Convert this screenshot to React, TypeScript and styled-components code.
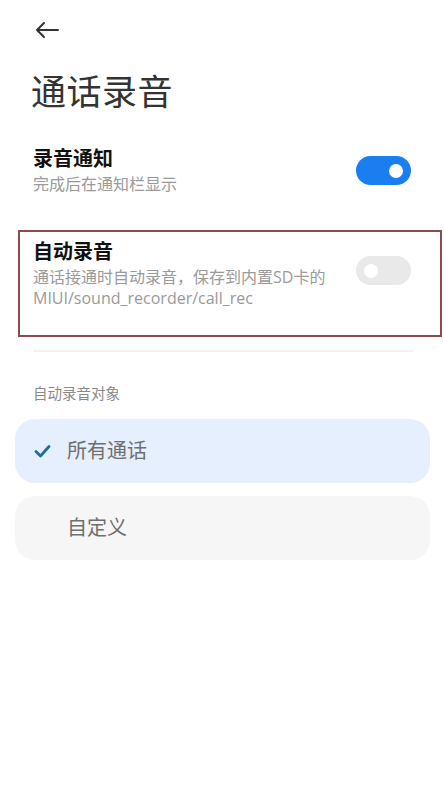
import React, { useState } from 'react';
import styled, { createGlobalStyle } from 'styled-components';

const GlobalStyle = createGlobalStyle`
  html, body {
    margin: 0;
    padding: 0;
    background: #ffffff;
  }
  body {
    font-family: "Open Sans", "Noto Sans CJK SC", sans-serif;
    -webkit-font-smoothing: antialiased;
  }
`;

const Page = styled.div`
  width: 444px;
  min-height: 800px;
  display: flex;
  flex-direction: column;
  box-sizing: border-box;
  padding-bottom: 40px;
`;

const Header = styled.div`
  height: 60px;
  display: flex;
  align-items: center;
  padding: 0 0 0 34px;
`;

const BackButton = styled.button`
  background: none;
  border: none;
  padding: 0;
  width: 28px;
  height: 28px;
  display: flex;
  align-items: center;
  cursor: pointer;
  color: #333;
`;

const Title = styled.h1`
  margin: 12px 0 0 31px;
  font-size: 35px;
  font-weight: 400;
  line-height: 40px;
  color: #333;
  letter-spacing: 0.5px;
`;

const Row = styled.div<{ $highlight?: boolean }>`
  display: flex;
  justify-content: space-between;
  box-sizing: border-box;
  ${p => p.$highlight
    ? `
    align-items: flex-start;
    margin: 0 2px 0 18px;
    padding: 7px 29px 26px 13px;
    border: 2px solid #8c4b4e;
  `
    : `
    align-items: center;
    padding: 0 33px;
  `}
`;

const RowText = styled.div`
  display: flex;
  flex-direction: column;
  min-width: 0;
`;

const RowTitle = styled.div`
  font-size: 20px;
  font-weight: 700;
  color: #111;
  line-height: 26px;
`;

const RowDesc = styled.div`
  font-size: 16px;
  color: #9a9a9a;
  line-height: 21px;
  margin-top: 2px;
`;

const Switch = styled.button<{ $on: boolean; $offset?: number }>`
  position: relative;
  flex-shrink: 0;
  width: 55px;
  height: 29px;
  margin-top: ${p => p.$offset ?? 0}px;
  border-radius: 15px;
  border: none;
  padding: 0;
  cursor: pointer;
  background: ${p => (p.$on ? '#1a7ef0' : '#e9e9e9')};

  &::after {
    content: '';
    position: absolute;
    top: 7.5px;
    left: ${p => (p.$on ? '33px' : '8px')};
    width: 14px;
    height: 14px;
    border-radius: 50%;
    background: #fff;
  }
`;

const Divider = styled.div`
  height: 2px;
  background: #f2f2f2;
  margin: 13px 31px 0 33px;
`;

const SectionLabel = styled.div`
  font-size: 14.5px;
  color: #8a8a8a;
  margin: 32px 0 0 33px;
  line-height: 20px;
`;

const OptionList = styled.div`
  display: flex;
  flex-direction: column;
  gap: 13px;
  margin: 15px 14px 0 15px;
`;

const Option = styled.div<{ $selected: boolean }>`
  height: 64px;
  border-radius: 20px;
  display: flex;
  align-items: center;
  padding-left: 19px;
  background: ${p => (p.$selected ? '#e5effd' : '#f6f6f6')};
  cursor: pointer;
`;

const CheckSlot = styled.div`
  width: 33px;
  display: flex;
  align-items: center;
`;

const OptionLabel = styled.span`
  font-size: 20px;
  color: #6f6f6f;
  line-height: 26px;
`;

const BackArrow = () => (
  <svg width="26" height="18" viewBox="0 0 26 18" fill="none">
    <path d="M24 9H3M10 2L3 9l7 7" stroke="#333" strokeWidth="2" strokeLinecap="round" strokeLinejoin="round" />
  </svg>
);

const CheckMark = () => (
  <svg width="17" height="14" viewBox="0 0 17 14" fill="none">
    <path d="M2 7.5l4.5 4.5L15 2.5" stroke="#1f6e9e" strokeWidth="2.8" strokeLinecap="round" strokeLinejoin="round" />
  </svg>
);

export default function App() {
  const [notify, setNotify] = useState(true);
  const [auto, setAuto] = useState(false);
  const [target, setTarget] = useState<'all' | 'custom'>('all');

  return (
    <>
      <GlobalStyle />
      <Page>
        <Header>
          <BackButton aria-label="返回">
            <BackArrow />
          </BackButton>
        </Header>
        <Title>通话录音</Title>

        <Row style={{ marginTop: 34 }}>
          <RowText>
            <RowTitle>录音通知</RowTitle>
            <RowDesc>完成后在通知栏显示</RowDesc>
          </RowText>
          <Switch $on={notify} onClick={() => setNotify(!notify)} />
        </Row>

        <Row $highlight style={{ marginTop: 35 }}>
          <RowText>
            <RowTitle>自动录音</RowTitle>
            <RowDesc>
              通话接通时自动录音，保存到内置SD卡的
              <br />
              MIUI/sound_recorder/call_rec
            </RowDesc>
          </RowText>
          <Switch $on={auto} $offset={17} onClick={() => setAuto(!auto)} />
        </Row>

        <Divider />

        <SectionLabel>自动录音对象</SectionLabel>
        <OptionList>
          <Option $selected={target === 'all'} onClick={() => setTarget('all')}>
            <CheckSlot>{target === 'all' && <CheckMark />}</CheckSlot>
            <OptionLabel>所有通话</OptionLabel>
          </Option>
          <Option $selected={target === 'custom'} onClick={() => setTarget('custom')}>
            <CheckSlot>{target === 'custom' && <CheckMark />}</CheckSlot>
            <OptionLabel>自定义</OptionLabel>
          </Option>
        </OptionList>
      </Page>
    </>
  );
}
